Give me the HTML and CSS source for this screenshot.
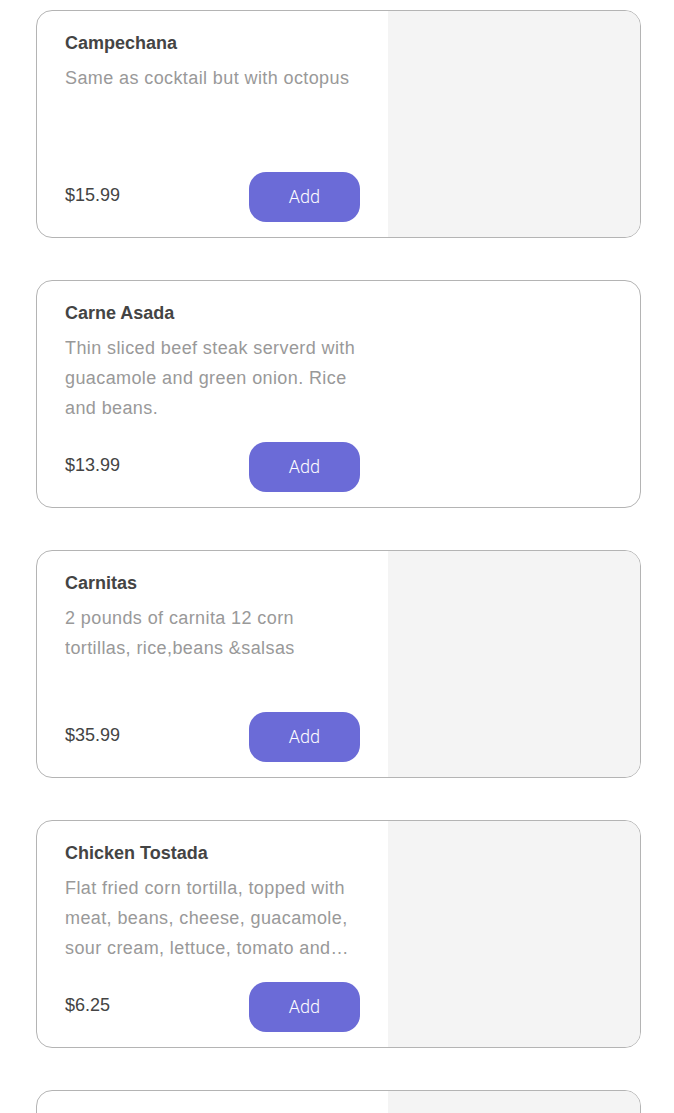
FILE: index.html
```html
<!DOCTYPE html>
<html lang="en">
<head>
<meta charset="utf-8">
<title>Menu</title>
<link rel="stylesheet" href="styles.css">
</head>
<body>
<main class="list">
  <article class="card">
    <div class="info">
      <h3 class="name">Campechana</h3>
      <p class="desc">Same as cocktail but with octopus</p>
      <div class="foot">
        <span class="price">$15.99</span>
        <button class="add">Add</button>
      </div>
    </div>
    <div class="photo"></div>
  </article>
  <article class="card">
    <div class="info">
      <h3 class="name">Carne Asada</h3>
      <p class="desc">Thin sliced beef steak serverd with guacamole and green onion. Rice and beans.</p>
      <div class="foot">
        <span class="price">$13.99</span>
        <button class="add">Add</button>
      </div>
    </div>
  </article>
  <article class="card">
    <div class="info">
      <h3 class="name">Carnitas</h3>
      <p class="desc">2 pounds of carnita 12 corn tortillas, rice,beans &amp;salsas</p>
      <div class="foot">
        <span class="price">$35.99</span>
        <button class="add">Add</button>
      </div>
    </div>
    <div class="photo"></div>
  </article>
  <article class="card">
    <div class="info">
      <h3 class="name">Chicken Tostada</h3>
      <p class="desc">Flat fried corn tortilla, topped with meat, beans, cheese, guacamole, sour cream, lettuce, tomato and onion.</p>
      <div class="foot">
        <span class="price">$6.25</span>
        <button class="add">Add</button>
      </div>
    </div>
    <div class="photo"></div>
  </article>
  <article class="card">
    <div class="info">
      <h3 class="name">Chile Relleno</h3>
      <p class="desc">Poblano pepper stuffed with cheese, served with rice and beans.</p>
      <div class="foot">
        <span class="price">$12.99</span>
        <button class="add">Add</button>
      </div>
    </div>
    <div class="photo"></div>
  </article>
</main>
</body>
</html>
```
FILE: styles.css
```css
html, body {
  margin: 0;
  padding: 0;
  background: #ffffff;
}
body {
  font-family: "Liberation Sans", Arial, sans-serif;
  overflow: hidden;
}
.list {
  display: flex;
  flex-direction: column;
  gap: 42px;
  padding: 10px 33px 0 36px;
}
.card {
  display: flex;
  height: 228px;
  box-sizing: border-box;
  border: 1px solid #b4b4b4;
  border-radius: 16px;
  overflow: hidden;
  background: #fff;
}
.info {
  width: 351px;
  box-sizing: border-box;
  padding: 20px 28px 15px 28px;
  display: flex;
  flex-direction: column;
}
.name {
  margin: 0;
  font-size: 18px;
  line-height: 24px;
  font-weight: 700;
  color: #444444;
}
.desc {
  margin: 8px 0 0 0;
  font-size: 18px;
  line-height: 30px;
  letter-spacing: 0.4px;
  color: #999999;
  display: -webkit-box;
  -webkit-line-clamp: 3;
  -webkit-box-orient: vertical;
  overflow: hidden;
}
.foot {
  margin-top: auto;
  display: flex;
  justify-content: space-between;
  align-items: center;
}
.price {
  font-size: 18px;
  color: #444444;
  margin-top: -4px;
}
.add {
  width: 111px;
  height: 50px;
  border: none;
  border-radius: 17px;
  background: #6b6bd7;
  color: #ffffff;
  font-family: Roboto, "Liberation Sans", sans-serif;
  font-weight: 300;
  font-size: 18px;
  padding: 0 0 2px 0;
}
.photo {
  flex: 1;
  background: #f4f4f4;
}
```
